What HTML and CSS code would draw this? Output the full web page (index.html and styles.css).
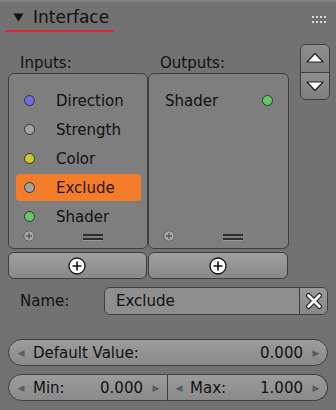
FILE: index.html
```html
<!DOCTYPE html>
<html>
<head>
<meta charset="utf-8">
<link rel="stylesheet" href="styles.css">
</head>
<body>
<div class="panel">
  <div class="header">
    <div class="title">
      <svg class="tri" width="11" height="9" viewBox="0 0 11 9"><path d="M0.5 0.5H10.5L5.5 8.5Z" fill="#111"/></svg>
      <span class="title-text">Interface</span>
    </div>
    <svg class="grip" width="14" height="8" viewBox="0 0 14 8">
      <g fill="#d8d8d8">
        <rect x="0" y="0" width="2" height="2"/><rect x="4" y="0" width="2" height="2"/><rect x="8" y="0" width="2" height="2"/><rect x="12" y="0" width="2" height="2"/>
        <rect x="0" y="5" width="2" height="2"/><rect x="4" y="5" width="2" height="2"/><rect x="8" y="5" width="2" height="2"/><rect x="12" y="5" width="2" height="2"/>
      </g>
    </svg>
  </div>

  <div class="main">
    <div class="lists">
      <div class="label">Inputs:</div>
      <div class="label out">Outputs:</div>
      <div class="list">
        <div class="row"><span class="dot blue"></span><span>Direction</span></div>
        <div class="row"><span class="dot gray"></span><span>Strength</span></div>
        <div class="row"><span class="dot yellow"></span><span>Color</span></div>
        <div class="row active"><span class="dot gray"></span><span>Exclude</span></div>
        <div class="row"><span class="dot green"></span><span>Shader</span></div>
        <div class="list-foot">
          <svg class="mini-plus" width="12" height="12" viewBox="0 0 12 12"><circle cx="6" cy="6" r="5.2" fill="#a8a8a8" stroke="#666" stroke-width="1"/><path d="M6 3v6M3 6h6" stroke="#555" stroke-width="1.3"/></svg>
          <span class="grab"></span>
        </div>
      </div>
      <div class="list">
        <div class="row orow"><span>Shader</span><span class="dot green"></span></div>
        <div class="spacer"></div>
        <div class="list-foot">
          <svg class="mini-plus" width="12" height="12" viewBox="0 0 12 12"><circle cx="6" cy="6" r="5.2" fill="#a8a8a8" stroke="#666" stroke-width="1"/><path d="M6 3v6M3 6h6" stroke="#555" stroke-width="1.3"/></svg>
          <span class="grab"></span>
        </div>
      </div>
      <div class="addbtn"><svg width="18" height="18" viewBox="0 0 18 18"><circle cx="9" cy="9" r="8" fill="#fff" stroke="#111" stroke-width="1.3"/><path d="M9 4.5v9M4.5 9h9" stroke="#111" stroke-width="1.6"/></svg></div>
      <div class="addbtn"><svg width="18" height="18" viewBox="0 0 18 18"><circle cx="9" cy="9" r="8" fill="#fff" stroke="#111" stroke-width="1.3"/><path d="M9 4.5v9M4.5 9h9" stroke="#111" stroke-width="1.6"/></svg></div>
    </div>
    <div class="updown">
      <div class="ud"><svg width="20" height="12" viewBox="0 0 20 12"><path d="M10 1.5L18 10H2Z" fill="#fff" stroke="#222" stroke-width="1.2" stroke-linejoin="round"/></svg></div>
      <div class="ud"><svg width="20" height="12" viewBox="0 0 20 12"><path d="M10 10.5L18 2H2Z" fill="#fff" stroke="#222" stroke-width="1.2" stroke-linejoin="round"/></svg></div>
    </div>
  </div>

  <div class="name-row">
    <span class="name-label">Name:</span>
    <div class="name-field">
      <span class="name-text">Exclude</span>
      <div class="xbtn"><svg width="18" height="18" viewBox="0 0 18 18"><path d="M3.5 3.5L14.5 14.5M14.5 3.5L3.5 14.5" stroke="#222" stroke-width="5" stroke-linecap="round"/><path d="M3.5 3.5L14.5 14.5M14.5 3.5L3.5 14.5" stroke="#fff" stroke-width="2.8" stroke-linecap="round"/></svg></div>
    </div>
  </div>

  <div class="slider full">
    <span class="arr">&#9664;</span><span class="s-label">Default Value:</span><span class="s-val">0.000</span><span class="arr">&#9654;</span>
  </div>
  <div class="slider-pair">
    <div class="slider left">
      <span class="arr">&#9664;</span><span class="s-label">Min:</span><span class="s-val">0.000</span><span class="arr">&#9654;</span>
    </div>
    <div class="slider right">
      <span class="arr">&#9664;</span><span class="s-label">Max:</span><span class="s-val">1.000</span><span class="arr">&#9654;</span>
    </div>
  </div>
</div>
</body>
</html>
```

FILE: styles.css
```css
* { box-sizing: border-box; }
html, body { margin: 0; padding: 0; }
body {
  width: 336px;
  height: 410px;
  background: #727272;
  font-family: "DejaVu Sans", sans-serif;
  color: #111;
  overflow: hidden;
}
.panel {
  height: 410px;
  border-top: 2px solid #808080;
}
.header {
  height: 34px;
  display: flex;
  align-items: flex-start;
  justify-content: space-between;
  padding: 3px 10px 0 5px;
}
.title {
  display: flex;
  align-items: center;
  border-bottom: 2px solid #d8283a;
  padding: 0 5px 1px 8px;
  height: 27px;
}
.tri { margin-right: 9px; margin-top: 1px; }
.title-text { font-size: 17px; color: #111; }
.grip { margin-top: 11px; }

.main {
  display: flex;
  padding: 16px 6px 0 8px;
}
.lists {
  display: grid;
  grid-template-columns: 140px 141px;
  grid-template-rows: 21px 176px 30px;
  column-gap: 0;
}
.label {
  font-size: 15px;
  padding-left: 12px;
  padding-top: 2px;
}
.list {
  background: #7e7e7e;
  border: 1px solid #3f3f3f;
  border-radius: 6px;
  padding-top: 12px;
  display: flex;
  flex-direction: column;
  overflow: hidden;
}
.row {
  flex: none;
  height: 29px;
  display: flex;
  align-items: center;
  font-size: 15px;
  margin: 0 6px 0 7px;
  padding-left: 8px;
}
.row.active {
  background: #f47d2b;
  border-radius: 4px;
  height: 27px;
  margin-top: 1px;
  margin-bottom: 1px;
  color: #2a1608;
}
.row .dot { margin-right: 21px; }
.orow {
  justify-content: space-between;
  padding-left: 9px;
  padding-right: 9px;
  margin-left: 7px;
  margin-right: 6px;
}
.orow .dot { margin-right: 0; }
.spacer { flex: 1; }
.dot {
  width: 11px;
  height: 11px;
  border-radius: 50%;
  border: 1px solid #333;
  flex: none;
}
.dot.blue { background: #6b6be0; }
.dot.gray { background: #a3a3a3; }
.dot.yellow { background: #c8cb2e; }
.dot.green { background: #63c763; }
.list-foot {
  flex: none;
  margin-top: auto;
  height: 17px;
  display: flex;
  align-items: flex-start;
  padding-left: 14px;
}
.mini-plus { margin-top: -1px; }
.grab {
  margin-left: 48px;
  margin-top: 3px;
  width: 20px;
  height: 6px;
  border-top: 2px solid #2e2e2e;
  border-bottom: 2px solid #2e2e2e;
  box-shadow: 0 1px 0 #9a9a9a;
}
.addbtn {
  margin-top: 3px;
  height: 27px;
  border: 1px solid #3f3f3f;
  border-radius: 6px;
  background: linear-gradient(#a0a0a0, #888888);
  display: flex;
  align-items: center;
  justify-content: center;
  margin-right: 1px;
}
.addbtn svg { margin-left: -1px; }
.updown {
  margin-left: 11px;
  margin-top: -8px;
  width: 30px;
  height: 56px;
  border: 1px solid #3f3f3f;
  border-radius: 6px;
  display: flex;
  flex-direction: column;
  overflow: hidden;
}
.ud {
  flex: 1;
  display: flex;
  align-items: center;
  justify-content: center;
  background: linear-gradient(#8e8e8e, #7e7e7e);
}
.ud + .ud { border-top: 1px solid #3f3f3f; }

.name-row {
  display: flex;
  align-items: center;
  padding: 4px 8px 0 20px;
  height: 36px;
  box-sizing: content-box;
}
.name-label { font-size: 15px; width: 84px; }
.name-field {
  flex: 1;
  height: 28px;
  display: flex;
  border: 1px solid #3f3f3f;
  border-radius: 6px;
  background: #8e8e8e;
  overflow: hidden;
}
.name-text {
  flex: 1;
  font-size: 15px;
  padding-left: 11px;
  display: flex;
  align-items: center;
}
.xbtn {
  width: 28px;
  border-left: 1px solid #3f3f3f;
  background: linear-gradient(#9a9a9a, #888);
  display: flex;
  align-items: center;
  justify-content: center;
}

.slider {
  height: 27px;
  border: 1px solid #3f3f3f;
  background: linear-gradient(#9c9c9c, #8a8a8a);
  display: flex;
  align-items: center;
  font-size: 15px;
  padding: 0 6px 0 7px;
}
.slider.full {
  margin: 20px 8px 0 8px;
  border-radius: 14px;
}
.slider-pair {
  display: flex;
  margin: 8px 8px 0 8px;
}
.slider.left {
  width: 160px;
  border-radius: 14px 0 0 14px;
}
.slider.right {
  flex: 1;
  border-left: none;
  border-radius: 0 14px 14px 0;
  padding-left: 6px;
}
.arr {
  font-size: 9px;
  color: #5c5c5c;
  width: 10px;
  text-align: center;
}
.s-label { margin-left: 7px; flex: 1; }
.s-val { margin-right: 8px; }
.slider.right .s-label { margin-left: 6px; }
```
